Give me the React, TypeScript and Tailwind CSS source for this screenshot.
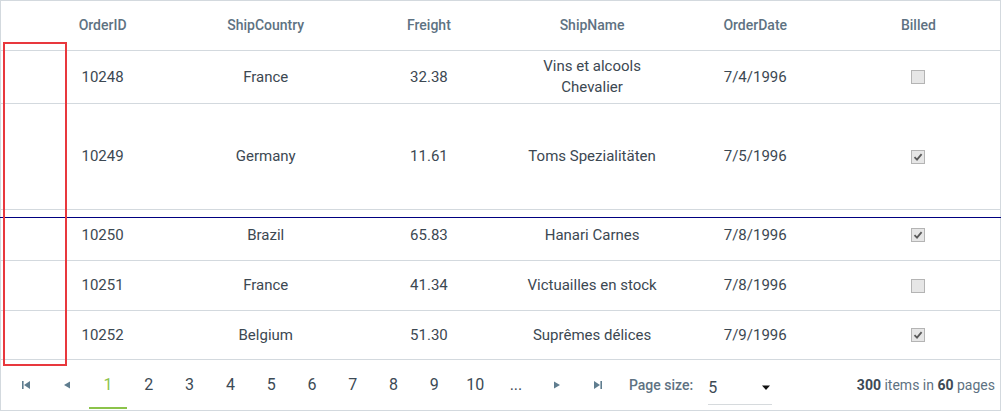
import React from 'react';

type Order = {
  id: number;
  country: string;
  freight: string;
  name: string[];
  date: string;
  billed: boolean;
  h: string;
};

const orders: Order[] = [
  { id: 10248, country: 'France', freight: '32.38', name: ['Vins et alcools', 'Chevalier'], date: '7/4/1996', billed: false, h: 'h-[53px]' },
  { id: 10249, country: 'Germany', freight: '11.61', name: ['Toms Spezialitäten'], date: '7/5/1996', billed: true, h: 'h-[106px]' },
  { id: 10250, country: 'Brazil', freight: '65.83', name: ['Hanari Carnes'], date: '7/8/1996', billed: true, h: 'h-[51px]' },
  { id: 10251, country: 'France', freight: '41.34', name: ['Victuailles en stock'], date: '7/8/1996', billed: false, h: 'h-[50px]' },
  { id: 10252, country: 'Belgium', freight: '51.30', name: ['Suprêmes délices'], date: '7/9/1996', billed: true, h: 'h-[49px]' },
];

const columns = ['OrderID', 'ShipCountry', 'Freight', 'ShipName', 'OrderDate', 'Billed'];

function Checkbox({ checked }: { checked: boolean }) {
  return (
    <div className="w-[14px] h-[14px] border border-[#b4b4b4] bg-[#e6e6e6] flex items-center justify-center">
      {checked && (
        <svg width="10" height="10" viewBox="0 0 10 10">
          <path d="M1.5 5.2 L4 7.6 L8.6 2.2" fill="none" stroke="#5a5a5a" strokeWidth="1.8" />
        </svg>
      )}
    </div>
  );
}

function PagerIcon({ kind }: { kind: 'first' | 'prev' | 'next' | 'last' }) {
  const fill = '#5f7d8f';
  return (
    <svg width="10" height="10" viewBox="0 0 10 10">
      {kind === 'first' && (
        <>
          <rect x="1" y="1" width="1.6" height="8" fill={fill} />
          <path d="M9 1 L3 5 L9 9 Z" fill={fill} />
        </>
      )}
      {kind === 'prev' && <path d="M8 1.5 L2 5 L8 8.5 Z" fill={fill} />}
      {kind === 'next' && <path d="M2 1.5 L8 5 L2 8.5 Z" fill={fill} />}
      {kind === 'last' && (
        <>
          <path d="M1 1 L7 5 L1 9 Z" fill={fill} />
          <rect x="7.4" y="1" width="1.6" height="8" fill={fill} />
        </>
      )}
    </svg>
  );
}

function Pager() {
  const pages = ['1', '2', '3', '4', '5', '6', '7', '8', '9', '10', '...'];
  return (
    <div className="flex items-center h-[50px] pl-[5px] pr-[5px]">
      <div className="w-[40.8px] h-full flex items-center justify-center">
        <PagerIcon kind="first" />
      </div>
      <div className="w-[40.8px] h-full flex items-center justify-center">
        <PagerIcon kind="prev" />
      </div>
      {pages.map((p, i) => (
        <div key={p} className="relative w-[40.8px] h-full flex items-center justify-center">
          <span className={i === 0 ? 'text-[16px] text-[#8bc34a]' : 'text-[16px] text-[#3c4a55]'}>{p}</span>
          {i === 0 && <div className="absolute left-px right-px bottom-px h-[2px] bg-[#8bc34a]" />}
        </div>
      ))}
      <div className="w-[40.8px] h-full flex items-center justify-center">
        <PagerIcon kind="next" />
      </div>
      <div className="w-[40.8px] h-full flex items-center justify-center">
        <PagerIcon kind="last" />
      </div>
      <span className="ml-[11px] text-[14px] font-medium text-[#5e7282]">Page size:</span>
      <div className="ml-[15px] w-[64px] h-[34px] mt-[6px] border-b border-[#d6dadd] flex items-center justify-between">
        <span className="text-[16px] text-[#3c4a55]">5</span>
        <svg width="10" height="6" viewBox="0 0 10 6" className="mr-[1px]">
          <path d="M1 0.5 L9 0.5 L5 5 Z" fill="#111" />
        </svg>
      </div>
      <div className="ml-auto text-[14px] text-[#5e7282]">
        <span className="font-bold text-[#3c4a55]">300</span> items in{' '}
        <span className="font-bold text-[#3c4a55]">60</span> pages
      </div>
    </div>
  );
}

export default function App() {
  return (
    <div className="relative w-[1002px] h-[411px] bg-white font-['Roboto',sans-serif]">
      <div className="w-[1001px] h-[411px] border border-[#d3d9de]">
        {/* Header */}
        <div className="grid grid-cols-[20px_repeat(6,1fr)] h-[50px] border-b border-[#d3d9de]">
          <div />
          {columns.map(c => (
            <div key={c} className="flex items-center justify-center text-[14px] font-medium text-[#5e7282]">
              {c}
            </div>
          ))}
        </div>

        {/* Rows */}
        {orders.map(o => (
          <div key={o.id} className={`grid grid-cols-[20px_repeat(6,1fr)] ${o.h} border-b border-[#d3d9de] text-[15px] text-[#3c4852]`}>
            <div />
            <div className="flex items-center justify-center">{o.id}</div>
            <div className="flex items-center justify-center">{o.country}</div>
            <div className="flex items-center justify-center">{o.freight}</div>
            <div className="flex flex-col items-center justify-center leading-[21px]">
              {o.name.map(n => (
                <span key={n}>{n}</span>
              ))}
            </div>
            <div className="flex items-center justify-center">{o.date}</div>
            <div className="flex items-center justify-center">
              <Checkbox checked={o.billed} />
            </div>
          </div>
        ))}

        <Pager />
      </div>

      {/* drop indicator */}
      <div className="absolute left-0 right-[1px] top-[217px] h-px bg-[#000080]" />
      {/* highlight frame */}
      <div className="absolute left-[3px] top-[42px] w-[64px] h-[324px] border-2 border-[#e8383d]" />
    </div>
  );
}
